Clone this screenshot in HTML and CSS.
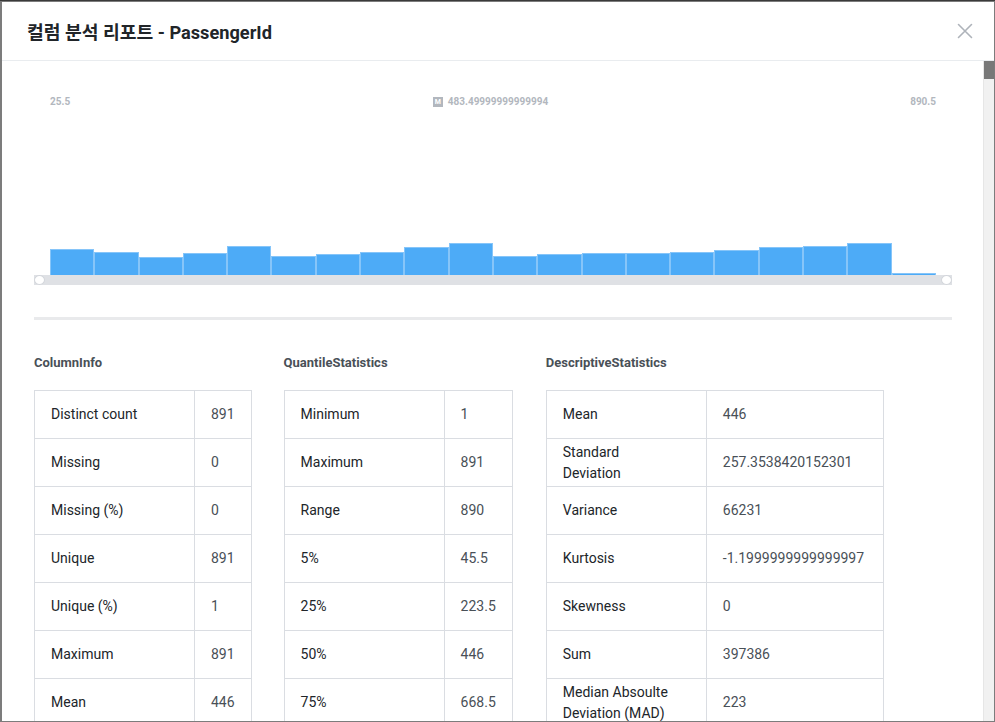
FILE: index.html
```html
<!DOCTYPE html>
<html lang="ko">
<head>
<meta charset="utf-8">
<title>컬럼 분석 리포트</title>
<link rel="stylesheet" href="styles.css">
</head>
<body>
<div class="screen">
  <div class="modal">
    <header class="modal-header">
      <h2 class="modal-title">컬럼 분석 리포트 - PassengerId</h2>
      <button class="close" aria-label="close">
        <svg width="16" height="16" viewBox="0 0 16 16"><path d="M1.5 1.5 L14.5 14.5 M14.5 1.5 L1.5 14.5" stroke="#aeb3ba" stroke-width="1.6" fill="none" stroke-linecap="round"/></svg>
      </button>
    </header>
    <div class="modal-body">
      <div class="content">
        <section class="chart">
          <div class="chart-labels">
            <span class="lbl-min">25.5</span>
            <span class="lbl-med"><span class="badge">M</span>483.49999999999994</span>
            <span class="lbl-max">890.5</span>
          </div>
          <div class="bars">
            <div class="bar" style="height:26px"></div>
            <div class="bar" style="height:23px"></div>
            <div class="bar" style="height:18px"></div>
            <div class="bar" style="height:22px"></div>
            <div class="bar" style="height:29px"></div>
            <div class="bar" style="height:19px"></div>
            <div class="bar" style="height:21px"></div>
            <div class="bar" style="height:23px"></div>
            <div class="bar" style="height:28px"></div>
            <div class="bar" style="height:32px"></div>
            <div class="bar" style="height:19px"></div>
            <div class="bar" style="height:21px"></div>
            <div class="bar" style="height:22px"></div>
            <div class="bar" style="height:22px"></div>
            <div class="bar" style="height:23px"></div>
            <div class="bar" style="height:25px"></div>
            <div class="bar" style="height:28px"></div>
            <div class="bar" style="height:29px"></div>
            <div class="bar" style="height:32px"></div>
            <div class="bar" style="height:2px"></div>
          </div>
          <div class="track"><span class="handle"></span><span class="handle"></span></div>
        </section>
        <div class="divider"></div>
        <div class="stats">
          <section class="stat-group">
            <h3 class="stat-title">ColumnInfo</h3>
            <div class="kv">
              <div class="k">Distinct count</div><div class="v">891</div>
              <div class="k">Missing</div><div class="v">0</div>
              <div class="k">Missing (%)</div><div class="v">0</div>
              <div class="k">Unique</div><div class="v">891</div>
              <div class="k">Unique (%)</div><div class="v">1</div>
              <div class="k">Maximum</div><div class="v">891</div>
              <div class="k">Mean</div><div class="v">446</div>
              <div class="k">Minimum</div><div class="v">1</div>
              <div class="k">Zeros</div><div class="v">0</div>
            </div>
          </section>
          <section class="stat-group">
            <h3 class="stat-title">QuantileStatistics</h3>
            <div class="kv">
              <div class="k">Minimum</div><div class="v">1</div>
              <div class="k">Maximum</div><div class="v">891</div>
              <div class="k">Range</div><div class="v">890</div>
              <div class="k">5%</div><div class="v">45.5</div>
              <div class="k">25%</div><div class="v">223.5</div>
              <div class="k">50%</div><div class="v">446</div>
              <div class="k">75%</div><div class="v">668.5</div>
              <div class="k">95%</div><div class="v">846.5</div>
              <div class="k">IQR</div><div class="v">445</div>
            </div>
          </section>
          <section class="stat-group stat-wide">
            <h3 class="stat-title">DescriptiveStatistics</h3>
            <div class="kv kv-wide">
              <div class="k">Mean</div><div class="v">446</div>
              <div class="k">Standard Deviation</div><div class="v">257.3538420152301</div>
              <div class="k">Variance</div><div class="v">66231</div>
              <div class="k">Kurtosis</div><div class="v">-1.1999999999999997</div>
              <div class="k">Skewness</div><div class="v">0</div>
              <div class="k">Sum</div><div class="v">397386</div>
              <div class="k">Median Absoulte Deviation (MAD)</div><div class="v">223</div>
              <div class="k">Coefficient of Variation</div><div class="v">0.5770</div>
            </div>
          </section>
        </div>
      </div>
      <div class="scrollbar"><div class="thumb"></div></div>
    </div>
  </div>
</div>
</body>
</html>
```

FILE: styles.css
```css
* { box-sizing: border-box; }
html, body { margin: 0; padding: 0; }
body {
  background: #7c7c7c;
  font-family: "Roboto", "Noto Sans CJK KR", "Noto Sans", sans-serif;
  color: #343a40;
}
.screen {
  width: 995px;
  height: 722px;
  padding: 1px 1px 2px 2px;
  border-top: 1px solid #3a3a3a;
  overflow: hidden;
}
.modal {
  width: 992px;
  height: 719px;
  background: #fff;
  display: flex;
  flex-direction: column;
  overflow: hidden;
}
.modal-header {
  flex: none;
  height: 59px;
  border-bottom: 1px solid #e9ecef;
  display: flex;
  align-items: center;
  justify-content: space-between;
  padding: 0 21px 0 25px;
}
.modal-title {
  margin: 0;
  font-family: "Roboto", "Noto Sans CJK KR", sans-serif;
  font-size: 18.2px;
  font-weight: 700;
  color: #212529;
}
.close {
  border: 0;
  background: transparent;
  padding: 0;
  width: 16px;
  height: 16px;
  display: flex;
  cursor: pointer;
}
.modal-body {
  flex: 1;
  display: flex;
  min-height: 0;
}
.content {
  flex: 1;
  overflow: hidden;
  padding: 35px 31px 0 32px;
}
.scrollbar {
  flex: none;
  width: 11px;
  background: #f1f1f1;
  border-left: 1px solid #e6e6e6;
}
.thumb {
  height: 18px;
  background: #787878;
}
.chart-labels {
  display: grid;
  grid-template-columns: 1fr auto 1fr;
  align-items: center;
  padding: 0 16px;
  font-size: 10px;
  line-height: 12px;
  font-weight: 700;
  color: #b2b7be;
}
.lbl-min { justify-self: start; }
.lbl-max { justify-self: end; }
.lbl-med { display: flex; align-items: center; gap: 5px; margin-left: -5px; }
.badge {
  width: 10px;
  height: 10px;
  background: #b2b7be;
  color: #fff;
  font-size: 7px;
  line-height: 10px;
  text-align: center;
  font-weight: 700;
}
.bars {
  height: 167px;
  display: flex;
  align-items: flex-end;
  padding: 0 16px;
}
.bar {
  flex: 1;
  background: #4dabf7;
  border: 1px solid #86c5f9;
  border-bottom: 0;
}
.track {
  height: 10px;
  background: #dfe1e5;
  display: flex;
  justify-content: space-between;
}
.handle {
  width: 11px;
  height: 10px;
  border-radius: 50%;
  background: #fff;
  border: 1px solid #d3d6db;
}
.divider {
  height: 3px;
  background: #e9eaec;
  margin-top: 32px;
}
.stats {
  display: flex;
  gap: 32px;
  align-items: flex-start;
  margin-top: 34px;
}
.stat-wide { margin-left: 1px; }
.stat-title {
  margin: 0 0 19px;
  font-size: 13px;
  line-height: 17px;
  font-weight: 700;
  color: #495057;
}
.kv {
  display: inline-grid;
  grid-template-columns: 160px max-content;
  border-top: 1px solid #dadde2;
  border-left: 1px solid #dadde2;
  font-size: 14px;
  line-height: 21px;
}
.k, .v {
  min-height: 48px;
  display: flex;
  align-items: center;
  border-right: 1px solid #dadde2;
  border-bottom: 1px solid #dadde2;
  padding: 2px 16px;
}
.k {
  padding-right: 32px;
  color: #212529;
  font-weight: 400;
}
.v {
  color: #495057;
}
.kv-wide .v {
  padding-right: 19px;
}
```
